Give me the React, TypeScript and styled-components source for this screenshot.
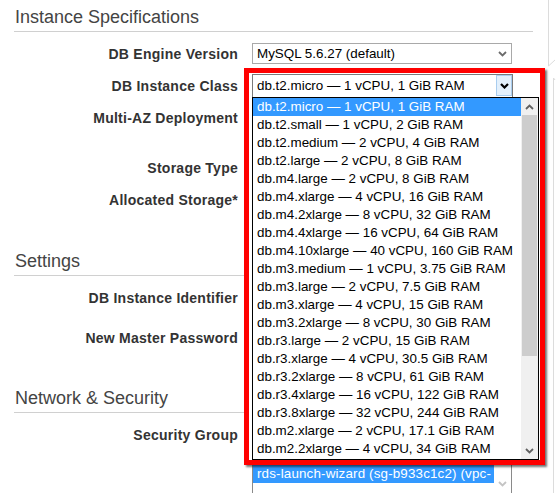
import React from "react";
import styled, { createGlobalStyle } from "styled-components";

const Global = createGlobalStyle`
  html, body { margin: 0; padding: 0; background: #fff; }
  body { font-family: "Liberation Sans", Arial, sans-serif; overflow: hidden; }
`;

const Page = styled.div`
  position: relative;
  width: 560px;
  height: 493px;
  overflow: hidden;
  padding-left: 14px;
  box-sizing: border-box;
`;

const Form = styled.div`
  width: 519px;
  display: flex;
  flex-direction: column;
`;

const Heading = styled.h2<{ $mt: number }>`
  margin: ${(p) => p.$mt}px 0 0;
  padding: 0 0 3px 1px;
  font-size: 18px;
  line-height: 22px;
  font-weight: normal;
  color: #444;
  border-bottom: 1px solid #d0d0d0;
`;

const Row = styled.div<{ $h: number; $mt?: number }>`
  display: grid;
  grid-template-columns: 224px 1fr;
  column-gap: 14px;
  height: ${(p) => p.$h}px;
  margin-top: ${(p) => p.$mt ?? 0}px;
`;

const Label = styled.div`
  text-align: right;
  font-size: 14px;
  line-height: 20px;
  font-weight: bold;
  color: #333;
  letter-spacing: 0.25px;
`;

const Select = styled.div`
  position: relative;
  margin-top: -1px;
  width: 260px;
  height: 21px;
  box-sizing: border-box;
  border: 1px solid #a9a9a9;
  font-size: 13.4px;
  line-height: 19px;
  padding-left: 4px;
  color: #000;
`;

const ChevronSlot = styled.span<{ $right: number; $top: number }>`
  position: absolute;
  right: ${(p) => p.$right}px;
  top: ${(p) => p.$top}px;
  display: flex;
`;

const ListBox = styled.div`
  position: relative;
  width: 260px;
  height: 120px;
  box-sizing: border-box;
  border-left: 1px solid #8a8a8a;
  border-right: 1px solid #8a8a8a;
  display: flex;
`;

const ListItems = styled.div`
  flex: 1;
  padding-top: 40px;
  overflow: hidden;
`;

const Option = styled.div<{ $selected?: boolean; $wide?: boolean }>`
  height: 18px;
  line-height: 18px;
  padding-left: 4px;
  font-size: 13.4px;
  letter-spacing: ${(p) => (p.$wide ? "0.15px" : "0")};
  white-space: nowrap;
  overflow: hidden;
  color: ${(p) => (p.$selected ? "#fff" : "#000")};
  background: ${(p) => (p.$selected ? "#3399ff" : "transparent")};
`;

const SideBar = styled.div`
  width: 17px;
  display: flex;
  flex-direction: column;
  align-items: center;
  padding-top: 38px;
  gap: 10px;
`;

const Dots = styled.div`
  width: 15px;
  height: 8px;
  background-image: radial-gradient(#c8c8c8 0.6px, transparent 0.7px);
  background-size: 2px 2px;
`;

/* open dropdown popup, highlighted by a red frame over the form */
const Popup = styled.div`
  position: absolute;
  left: 244px;
  top: 68px;
  width: 301px;
  height: 397px;
  box-sizing: border-box;
  border: 5px solid #ff0000;
  box-shadow: 2px 2px 2px rgba(0, 0, 0, 0.55);
  background: #fff;
  padding: 1px 0 0 3px;
  display: flex;
  flex-direction: column;
`;

const OpenField = styled.div`
  position: relative;
  width: 261px;
  height: 23px;
  box-sizing: border-box;
  border: 1px solid #7a7a7a;
  border-bottom: none;
  font-size: 13.4px;
  line-height: 21px;
  padding-left: 4px;
  color: #000;
`;

const ArrowButton = styled.span`
  position: absolute;
  right: 0;
  top: 0;
  width: 16px;
  height: 21px;
  box-sizing: border-box;
  border: 1px solid #a9cdef;
  background-color: #e3f0fc;
  background-image: radial-gradient(#b5d4f2 0.6px, transparent 0.7px);
  background-size: 2px 2px;
  display: flex;
  align-items: center;
  justify-content: center;
`;

const DropList = styled.div`
  width: 287px;
  height: 363px;
  box-sizing: border-box;
  border: 1px solid #000;
  display: flex;
`;

const DropItems = styled.div`
  flex: 1;
  overflow: hidden;
`;

const ScrollBar = styled.div`
  width: 17px;
  background: #f0f0f0;
  display: flex;
  flex-direction: column;
`;

const ScrollButton = styled.div`
  height: 17px;
  display: flex;
  align-items: center;
  justify-content: center;
`;

const Thumb = styled.div`
  margin: 0 1px;
  height: 241px;
  background: #cdcdcd;
`;

const Track = styled.div`
  flex: 1;
`;

const Frame = styled.svg`
  position: absolute;
  left: 540px;
  top: 0;
`;

const Chevron = ({ up, color, w = 9, sw = 1.8 }: { up?: boolean; color: string; w?: number; sw?: number }) => (
  <svg width={w} height="6" viewBox="0 0 9 6">
    <polyline
      points={up ? "1,5 4.5,1.5 8,5" : "1,1 4.5,4.5 8,1"}
      fill="none"
      stroke={color}
      strokeWidth={sw}
    />
  </svg>
);

const classes = [
  "db.t2.micro — 1 vCPU, 1 GiB RAM",
  "db.t2.small — 1 vCPU, 2 GiB RAM",
  "db.t2.medium — 2 vCPU, 4 GiB RAM",
  "db.t2.large — 2 vCPU, 8 GiB RAM",
  "db.m4.large — 2 vCPU, 8 GiB RAM",
  "db.m4.xlarge — 4 vCPU, 16 GiB RAM",
  "db.m4.2xlarge — 8 vCPU, 32 GiB RAM",
  "db.m4.4xlarge — 16 vCPU, 64 GiB RAM",
  "db.m4.10xlarge — 40 vCPU, 160 GiB RAM",
  "db.m3.medium — 1 vCPU, 3.75 GiB RAM",
  "db.m3.large — 2 vCPU, 7.5 GiB RAM",
  "db.m3.xlarge — 4 vCPU, 15 GiB RAM",
  "db.m3.2xlarge — 8 vCPU, 30 GiB RAM",
  "db.r3.large — 2 vCPU, 15 GiB RAM",
  "db.r3.xlarge — 4 vCPU, 30.5 GiB RAM",
  "db.r3.2xlarge — 8 vCPU, 61 GiB RAM",
  "db.r3.4xlarge — 16 vCPU, 122 GiB RAM",
  "db.r3.8xlarge — 32 vCPU, 244 GiB RAM",
  "db.m2.xlarge — 2 vCPU, 17.1 GiB RAM",
  "db.m2.2xlarge — 4 vCPU, 34 GiB RAM",
];

export default function App() {
  return (
    <Page>
      <Global />
      <Form>
        <Heading $mt={6}>Instance Specifications</Heading>
        <Row $h={32} $mt={12}>
          <Label>DB Engine Version</Label>
          <Select>
            MySQL 5.6.27 (default)
            <ChevronSlot $right={4} $top={7}>
              <Chevron color="#6b6b6b" />
            </ChevronSlot>
          </Select>
        </Row>
        <Row $h={32}>
          <Label>DB Instance Class</Label>
          <div />
        </Row>
        <Row $h={50}>
          <Label>Multi-AZ Deployment</Label>
          <div />
        </Row>
        <Row $h={32}>
          <Label>Storage Type</Label>
          <div />
        </Row>
        <Row $h={40}>
          <Label>Allocated Storage*</Label>
          <div />
        </Row>
        <Heading $mt={20}>Settings</Heading>
        <Row $h={40} $mt={12}>
          <Label>DB Instance Identifier</Label>
          <div />
        </Row>
        <Row $h={40}>
          <Label>New Master Password</Label>
          <div />
        </Row>
        <Heading $mt={19}>Network &amp; Security</Heading>
        <Row $h={120} $mt={12}>
          <Label>Security Group</Label>
          <ListBox>
            <ListItems>
              <Option $selected $wide>rds-launch-wizard (sg-b933c1c2) (vpc-</Option>
            </ListItems>
            <SideBar>
              <Dots />
              <Chevron color="#c4c4c4" />
            </SideBar>
          </ListBox>
        </Row>
      </Form>

      <Popup>
        <OpenField>
          db.t2.micro — 1 vCPU, 1 GiB RAM
          <ArrowButton>
            <Chevron color="#000" sw={2.2} />
          </ArrowButton>
        </OpenField>
        <DropList>
          <DropItems>
            {classes.map((c, i) => (
              <Option key={c} $selected={i === 0}>
                {c}
              </Option>
            ))}
          </DropItems>
          <ScrollBar>
            <ScrollButton>
              <Chevron up color="#606060" />
            </ScrollButton>
            <Thumb />
            <Track />
            <ScrollButton>
              <Chevron color="#606060" />
            </ScrollButton>
          </ScrollBar>
        </DropList>
      </Popup>

      <Frame width="20" height="493" viewBox="0 0 20 493">
        <polyline points="8.5,0 8.5,66 15,60" fill="none" stroke="#dcdcdc" strokeWidth="1" />
        <polyline points="15,80 13.5,78 13.5,493" fill="none" stroke="#dcdcdc" strokeWidth="1" />
      </Frame>
    </Page>
  );
}
